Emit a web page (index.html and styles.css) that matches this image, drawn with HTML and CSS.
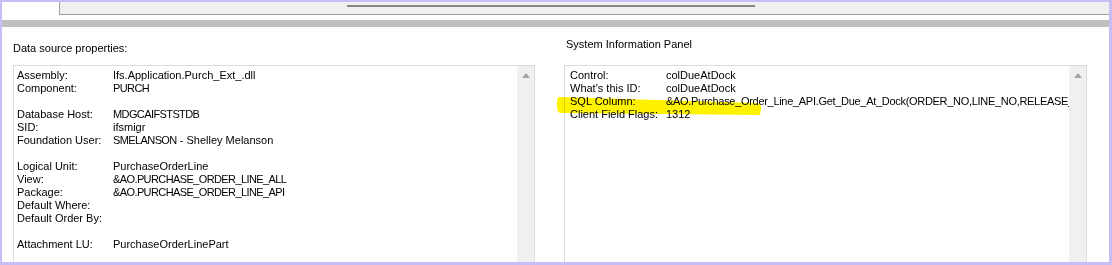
FILE: index.html
```html
<!DOCTYPE html>
<html lang="en">
  <head>
    <meta charset="UTF-8" />
    <title>System Information</title>
    <link rel="stylesheet" href="styles.css">
  </head>
  <body>
    <div class="frame">
      <div class="topbar">
        <div class="tab-blank"></div>
        <div class="tab-strip">
          <div class="thumb"></div>
        </div>
      </div>
      <div class="band"></div>

      <div class="content">
        <div class="col col-left">
          <p class="heading heading-left">Data source properties:</p>
          <div class="panel">
            <div class="panel-body">
              <div class="row"><span class="label">Assembly:</span><span class="value">Ifs.Application.Purch_Ext_.dll</span></div>
              <div class="row"><span class="label">Component:</span><span class="value caps">PURCH</span></div>
              <div class="row"></div>
              <div class="row"><span class="label">Database Host:</span><span class="value caps">MDGCAIFSTSTDB</span></div>
              <div class="row"><span class="label">SID:</span><span class="value">ifsmigr</span></div>
              <div class="row"><span class="label">Foundation User:</span><span class="value"><span class="caps">SMELANSON</span> - Shelley Melanson</span></div>
              <div class="row"></div>
              <div class="row"><span class="label">Logical Unit:</span><span class="value">PurchaseOrderLine</span></div>
              <div class="row"><span class="label">View:</span><span class="value caps">&amp;AO.PURCHASE_ORDER_LINE_ALL</span></div>
              <div class="row"><span class="label">Package:</span><span class="value caps">&amp;AO.PURCHASE_ORDER_LINE_API</span></div>
              <div class="row"><span class="label">Default Where:</span><span class="value"></span></div>
              <div class="row"><span class="label">Default Order By:</span><span class="value"></span></div>
              <div class="row"></div>
              <div class="row"><span class="label">Attachment LU:</span><span class="value">PurchaseOrderLinePart</span></div>
            </div>
            <div class="scrollbar"><span class="arrow-up"></span></div>
          </div>
        </div>

        <div class="col col-right">
          <p class="heading heading-right">System Information Panel</p>
          <div class="panel">
            <svg class="highlight" width="206" height="20" viewBox="0 0 206 20">
              <path d="M2 1 L200 7 Q205 8 204 13 L203 19 L3 17 Q0 16 0 9 Q0 1 2 1 Z" fill="#fff200" />
            </svg>
            <div class="panel-body panel-body-right">
              <div class="row"><span class="label">Control:</span><span class="value">colDueAtDock</span></div>
              <div class="row"><span class="label">What's this ID:</span><span class="value">colDueAtDock</span></div>
              <div class="row"><span class="label">SQL Column:</span><span class="value mixed">&amp;AO.Purchase_Order_Line_API.Get_Due_At_Dock(ORDER_NO,LINE_NO,RELEASE_NO,RECEIPT_NO)</span></div>
              <div class="row"><span class="label">Client Field Flags:</span><span class="value">1312</span></div>
            </div>
            <div class="scrollbar"><span class="arrow-up"></span></div>
          </div>
        </div>
      </div>
    </div>
  </body>
</html>
```

FILE: styles.css
```css
* {
  margin: 0;
  padding: 0;
  box-sizing: border-box;
}
body {
  background: #fff;
  font-family: "Liberation Sans", Arial, sans-serif;
  font-size: 11px;
  color: #000;
}
.frame {
  width: 1112px;
  height: 265px;
  border: solid #c6bff6;
  border-width: 2px 3px 3px 2px;
  overflow: hidden;
  display: flex;
  flex-direction: column;
}
.topbar {
  display: flex;
  height: 13px;
}
.tab-blank {
  width: 57px;
  background: #fff;
}
.tab-strip {
  flex: 1;
  background: #f0f0f0;
  border-left: 1px solid #a0a0a0;
  border-bottom: 1px solid #a0a0a0;
}
.thumb {
  width: 408px;
  height: 2px;
  margin: 3px 0 0 287px;
  background: #888;
}
.band {
  height: 7px;
  margin-top: 5px;
  background: #bfbfbf;
}
.content {
  flex: 1;
  display: flex;
  padding-left: 11px;
  gap: 29px;
  overflow: hidden;
}
.col {
  width: 522px;
  display: flex;
  flex-direction: column;
}
.col-right {
  width: 523px;
}
.heading {
  line-height: 13px;
  white-space: nowrap;
}
.heading-left {
  margin: 15px 0 10px 0;
}
.heading-right {
  margin: 11px 0 14px 2px;
}
.panel {
  position: relative;
  flex: 1;
  min-height: 220px;
  display: flex;
  border: 1px solid #dcdcdc;
  background: #fff;
}
.panel-body {
  flex: 1;
  overflow: hidden;
  padding: 3px 0 0 3px;
}
.panel-body-right {
  padding-left: 5px;
}
.row {
  display: flex;
  height: 13px;
  line-height: 13px;
  white-space: nowrap;
}
.label {
  width: 96px;
  flex-shrink: 0;
}
.value {
  white-space: nowrap;
}
/* Tahoma-like narrow capitals */
.caps {
  letter-spacing: -0.6px;
}
.mixed {
  letter-spacing: -0.3px;
}
.scrollbar {
  width: 17px;
  background: #f0f0f0;
  display: flex;
  justify-content: center;
}
.arrow-up {
  width: 0;
  height: 0;
  margin-top: 7px;
  border-left: 4px solid transparent;
  border-right: 4px solid transparent;
  border-bottom: 5px solid #a3a3a3;
}
.highlight {
  position: absolute;
  left: -8px;
  top: 30px;
  mix-blend-mode: multiply;
  z-index: 1;
}
```
